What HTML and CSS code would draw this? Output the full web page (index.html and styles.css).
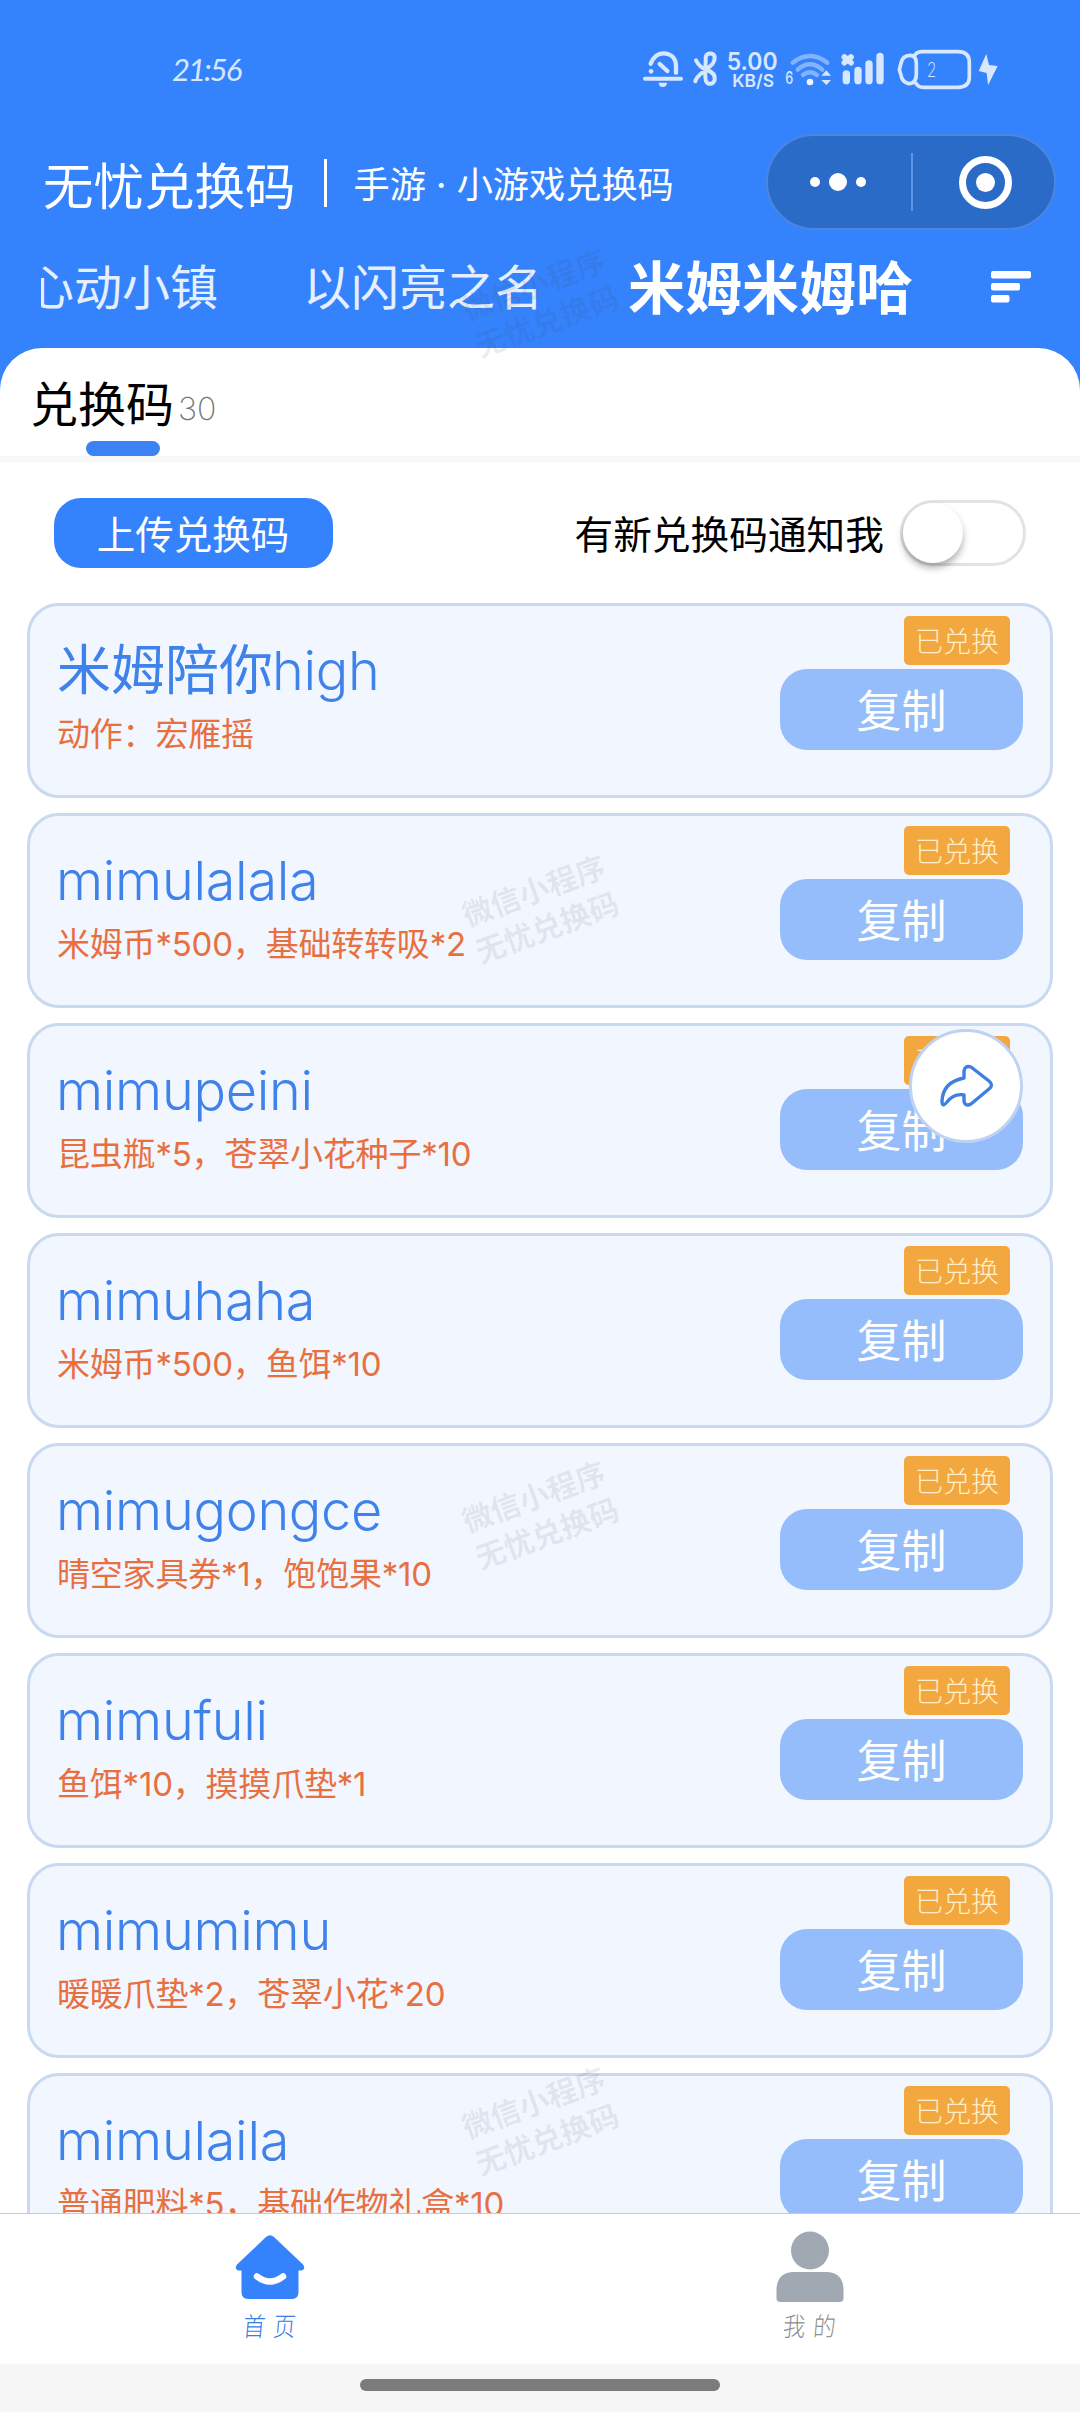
FILE: index.html
```html
<!DOCTYPE html>
<html lang="zh-CN">
<head>
<meta charset="utf-8">
<title>无忧兑换码</title>
<link rel="stylesheet" href="styles.css">
</head>
<body>
<div class="screen">
  <header class="header">
    <div class="status">
      <span class="time">21:56</span>
      <svg class="status-icons" viewBox="0 0 1320 240" width="440" height="80" fill="none" stroke="#d6e7ff" stroke-linecap="round" stroke-linejoin="round">
        <path d="M152 101C162 76 176 70 190 70C216 70 228 88 228 110V128M179 102L202 123" stroke-width="13"/>
        <circle cx="153" cy="124" r="7" fill="#d6e7ff" stroke="none"/>
        <path d="M135 146H243" stroke-width="12"/>
        <path d="M176 158H201Q200 171 188 171Q177 171 176 158Z" fill="#d6e7ff" stroke="none"/>
        <path d="M288 91C296 106 306 116 321 120C338 126 346 137 344 149C341 163 325 165 319 155C312 143 318 105 317 82C318 68 342 65 344 81C345 101 331 108 316 120C300 133 288 142 286 154" stroke-width="12"/>
        <g fill="#d6e7ff" stroke="none" font-family="Inter, sans-serif">
          <text x="380" y="120" font-size="72" font-weight="600" textLength="153" lengthAdjust="spacingAndGlyphs">5.00</text>
          <text x="397" y="172" font-size="53" font-weight="600" textLength="125" lengthAdjust="spacingAndGlyphs">KB/S</text>
          <text x="556" y="162" font-size="52" font-weight="500" textLength="24" lengthAdjust="spacingAndGlyphs">6</text>
          <text x="982" y="140" font-family="Lato, sans-serif" font-size="66" font-weight="300" textLength="26" lengthAdjust="spacingAndGlyphs">2</text>
        </g>
        <path d="M578 98Q630 58 682 98M593 119Q630 87 667 119M609 135Q630 118 651 135" stroke="#83b3fd" stroke-width="13"/>
        <circle cx="630" cy="156" r="10" fill="#eef5ff" stroke="none"/>
        <path d="M664 137L679 121L693 137ZM664 150H693L679 165Z" fill="#d6e7ff" stroke="none"/>
        <path d="M739 132V152M774 121V152M807 102V152M840 79V152" stroke-width="22"/>
        <path d="M733 81L753 98M753 81L733 98" stroke-width="17"/>
        <path d="M942 80Q948 65 966 65H1074Q1108 65 1108 98V142Q1108 172 1074 172H970Q955 172 948 160" stroke-width="11"/>
        <path d="M930 76Q949 76 949 100V132Q949 161 926 161Q905 155 903 135L898 119L903 100Q907 77 930 76Z" stroke-width="11"/>
        <path d="M1159 72L1136 123L1160 129L1164 166L1193 108L1167 105Z" fill="#d6e7ff" stroke="none"/>
      </svg>
    </div>
    <div class="topbar">
      <h1 class="title">无忧兑换码</h1>
      <i class="sep"></i>
      <span class="subtitle">手游 · 小游戏兑换码</span>
      <div class="capsule">
        <svg width="143" height="92" viewBox="0 0 143 92" fill="#fff"><circle cx="47" cy="46" r="5"/><circle cx="70" cy="46" r="9"/><circle cx="93" cy="46" r="5"/></svg>
        <i class="capsule-line"></i>
        <svg width="141" height="92" viewBox="0 0 141 92" fill="#fff"><circle cx="72.500" cy="46.500" r="23" fill="none" stroke="#fff" stroke-width="7"/><circle cx="72.500" cy="46.500" r="9.500"/></svg>
      </div>
    </div>
    <nav class="games">
      <div class="games-scroll">
        <span class="game">心动小镇</span>
        <span class="game">以闪亮之名</span>
        <span class="game active">米姆米姆哈</span>
      </div>
      <svg class="sort" width="40" height="32" viewBox="0 0 40 32" fill="#fff"><rect width="40" height="7.500" rx="2"/><rect y="12" width="29" height="7.500" rx="2"/><rect y="24" width="18.500" height="7.500" rx="2"/></svg>
    </nav>
  </header>

  <main class="panel">
    <div class="tab">
      <span class="tab-name">兑换码</span><span class="tab-count">30</span>
      <i class="tab-bar"></i>
    </div>
    <div class="tools">
      <button class="upload">上传兑换码</button>
      <label class="notify"><span class="notify-text">有新兑换码通知我</span><span class="switch"><i class="knob"></i></span></label>
    </div>
    <section class="list">
      <article class="card">
        <div class="info"><h2 class="code">米姆陪你<span class="latin">high</span></h2><p class="gift">动作：宏雁摇</p></div>
        <div class="side"><span class="badge">已兑换</span><button class="copy">复制</button></div>
      </article>
      <article class="card">
        <div class="info"><h2 class="code"><span class="latin">mimulalala</span></h2><p class="gift">米姆币*500，基础转转吸*2</p></div>
        <div class="side"><span class="badge">已兑换</span><button class="copy">复制</button></div>
      </article>
      <article class="card">
        <div class="info"><h2 class="code"><span class="latin">mimupeini</span></h2><p class="gift">昆虫瓶*5，苍翠小花种子*10</p></div>
        <div class="side"><span class="badge">已兑换</span><button class="copy">复制</button></div>
      </article>
      <article class="card">
        <div class="info"><h2 class="code"><span class="latin">mimuhaha</span></h2><p class="gift">米姆币*500，鱼饵*10</p></div>
        <div class="side"><span class="badge">已兑换</span><button class="copy">复制</button></div>
      </article>
      <article class="card">
        <div class="info"><h2 class="code"><span class="latin">mimugongce</span></h2><p class="gift">晴空家具券*1，饱饱果*10</p></div>
        <div class="side"><span class="badge">已兑换</span><button class="copy">复制</button></div>
      </article>
      <article class="card">
        <div class="info"><h2 class="code"><span class="latin">mimufuli</span></h2><p class="gift">鱼饵*10，摸摸爪垫*1</p></div>
        <div class="side"><span class="badge">已兑换</span><button class="copy">复制</button></div>
      </article>
      <article class="card">
        <div class="info"><h2 class="code"><span class="latin">mimumimu</span></h2><p class="gift">暖暖爪垫*2，苍翠小花*20</p></div>
        <div class="side"><span class="badge">已兑换</span><button class="copy">复制</button></div>
      </article>
      <article class="card">
        <div class="info"><h2 class="code"><span class="latin">mimulaila</span></h2><p class="gift">普通肥料*5，基础作物礼盒*10</p></div>
        <div class="side"><span class="badge">已兑换</span><button class="copy">复制</button></div>
      </article>
    </section>
  </main>

  <footer class="tabbar">
    <a class="tabbar-item current">
      <svg width="70" height="76" viewBox="0 0 70 76"><path d="M31 7Q35 3.500 39 7L68 34.500Q71 39 67 40.500H63.500V62Q63.500 69 57 69H13Q6.500 69 6.500 62V40.500H3Q-1 39 2 34.500Z" fill="#3583fc"/><path d="M22 46.500Q35 56.500 48 46.500" fill="none" stroke="#fff" stroke-width="6.500" stroke-linecap="round"/></svg>
      <span class="tabbar-label">首页</span>
    </a>
    <a class="tabbar-item">
      <svg width="70" height="76" viewBox="0 0 70 76" fill="#a0a8b1"><circle cx="35" cy="20.500" r="19"/><path d="M1.500 58Q3 42 19 42H51Q67 42 68.500 58V68Q68.500 72 64.500 72H5.500Q1.500 72 1.500 68Z"/></svg>
      <span class="tabbar-label">我的</span>
    </a>
  </footer>
  <div class="gesture"><i class="gesture-bar"></i></div>

  <button class="share" aria-label="分享">
    <svg width="56" height="46" viewBox="0 0 56 46" fill="none" stroke="#3e7fe0" stroke-width="3.400" stroke-linejoin="round"><path d="M26 15V8Q27 2 33 4L51 18Q56 22 51 26L33 41Q27 44 26 38V32Q16 30 9 39Q4 45 4 38Q5 19 26 15Z"/></svg>
  </button>

  <div class="watermark w1">微信小程序<br>无忧兑换码</div>
  <div class="watermark w2">微信小程序<br>无忧兑换码</div>
  <div class="watermark w3">微信小程序<br>无忧兑换码</div>
  <div class="watermark w4">微信小程序<br>无忧兑换码</div>
</div>
</body>
</html>
```
FILE: styles.css
```css
* { box-sizing: border-box; }
body, h1, h2, p { margin: 0; }
body { background: #fff; }
button { border: 0; padding: 0; font-family: inherit; }
svg { display: block; flex: none; }

.screen {
  position: relative;
  width: 1080px;
  height: 2412px;
  overflow: hidden;
  display: flex;
  flex-direction: column;
  background: #3583fc;
  font-family: "Noto Sans CJK SC", sans-serif;
  font-weight: 400;
  white-space: nowrap;
}

.header { height: 348px; flex: none; color: #fff; }
.status { height: 120px; padding: 30px 40px 0 172px; display: flex; justify-content: space-between; }
.time { font: italic 400 31px/78px Lato, sans-serif; color: #d6e7ff; letter-spacing: -2px; }

.topbar { height: 126px; padding: 0 24px 6px 43px; display: flex; align-items: flex-end; }
.title { font-size: 50.500px; font-weight: 400; line-height: 60px; margin-bottom: 27px; }
.sep { width: 3px; height: 48px; margin: 0 27px 33px 28px; background: #fff; }
.subtitle { font-family: Inter, "Noto Sans CJK SC", sans-serif; font-size: 36.200px; line-height: 50px; margin-bottom: 30px; }
.capsule {
  width: 290px;
  height: 96px;
  margin-left: auto;
  margin-bottom: 10px;
  display: flex;
  align-items: center;
  background: #2b6bc8;
  border: 2px solid #4b86df;
  border-radius: 48px;
}
.capsule-line { width: 2px; height: 58px; flex: none; background: #5d94e8; }

.games { height: 82px; padding: 0 49px 0 41px; display: flex; align-items: center; justify-content: space-between; }
.games-scroll { width: 890px; height: 82px; overflow: hidden; display: flex; align-items: center; }
.game { font-size: 48px; line-height: 82px; height: 88px; color: #e6effd; margin-right: 85px; }
.game:first-child { margin-left: -15px; }
.game.active { font-size: 57px; font-weight: 700; color: #fff; margin-right: 0; }

.panel { flex: 1; min-height: 0; display: flex; flex-direction: column; background: #fff; border-radius: 42px 42px 0 0; overflow: hidden; }
.tab { position: relative; height: 114px; flex: none; padding-left: 30px; border-bottom: 6px solid #f8f8f9; display: flex; color: #000; }
.tab-name { font-size: 48px; line-height: 106px; }
.tab-count { font: 200 32px/121px Inter, sans-serif; color: #777; margin-left: 4px; }
.tab-bar { position: absolute; left: 86px; bottom: 0; width: 74px; height: 15px; border-radius: 7.5px; background: #3d82f3; }

.tools { height: 141px; flex: none; padding: 0 54px; display: flex; align-items: center; justify-content: space-between; }
.upload { width: 279px; height: 70px; border-radius: 27px; background: #3583fc; color: #fff; font-size: 38.500px; font-weight: 400; line-height: 68px; padding: 0 1px 2px 0; }
.notify { display: flex; align-items: center; gap: 16px; font-size: 38.700px; line-height: 64px; color: #000; }
.notify-text { padding-bottom: 2px; }
.switch { width: 126px; height: 66px; border: 3px solid #e3e3e3; border-radius: 33px; background: #fff; }
.knob { display: block; width: 60px; height: 60px; border-radius: 50%; background: #fff; box-shadow: 0 5px 7px rgba(0, 0, 0, .3); }

.list { padding: 0 27px; display: flex; flex-direction: column; gap: 15px; }
.card {
  height: 195px;
  flex: none;
  display: flex;
  justify-content: space-between;
  padding: 0 27px;
  background: #f1f6ff;
  border: 3px solid #c8d9f0;
  border-radius: 32px;
}
.info { padding-top: 25px; }
.code { height: 76px; font-size: 54px; font-weight: 400; line-height: 72px; color: #3f82ea; }
.latin { font-family: Inter, sans-serif; font-weight: 350; letter-spacing: -.3px; margin-left: -1px; }
.gift { font-family: Inter, "Noto Sans CJK SC", sans-serif; font-size: 33px; letter-spacing: -.2px; line-height: 54px; color: #e8703f; }
.side { width: 243px; padding-top: 10px; display: flex; flex-direction: column; align-items: flex-end; }
.badge { width: 106px; height: 49px; margin: 0 13px 4px 0; border-radius: 5px; background: #f2a73f; color: #ffefc8; font-size: 28px; font-weight: 300; line-height: 49px; text-align: center; }
.copy { width: 243px; height: 81px; border-radius: 27px; background: #95bdfc; color: #fff; font-size: 45px; font-weight: 400; line-height: 79px; padding-bottom: 2px; }

.tabbar { height: 151px; flex: none; display: flex; background: #fff; border-top: 1px solid #c5cbd3; }
.tabbar-item { flex: 1; display: flex; flex-direction: column; align-items: center; padding-top: 16px; color: #8f8f8f; }
.tabbar-item.current { color: #3a7ce0; }
.tabbar-label { font-size: 26px; font-weight: 300; line-height: 38px; letter-spacing: 9px; padding-left: 9px; transform: scaleX(.86) skewX(-6deg); }
.gesture { height: 48px; flex: none; padding-top: 15px; background: #f6f6f6; }
.gesture-bar { display: block; width: 360px; height: 12px; margin: 0 auto; border-radius: 6px; background: #7b7b7b; }

.share {
  position: absolute;
  left: 909px;
  top: 1029px;
  width: 114px;
  height: 114px;
  display: flex;
  align-items: center;
  justify-content: center;
  background: #fff;
  border: 3px solid #bed3f4;
  border-radius: 50%;
}

/* Tiled watermark, one every 606px */
.watermark { position: absolute; left: 440px; width: 200px; height: 78px; text-align: center; font-size: 30px; font-weight: 700; line-height: 39px; color: rgba(60, 60, 70, .09); transform: rotate(-20deg); pointer-events: none; }
.w1 { top: 263px; }
.w2 { top: 869px; }
.w3 { top: 1475px; }
.w4 { top: 2081px; }
```
